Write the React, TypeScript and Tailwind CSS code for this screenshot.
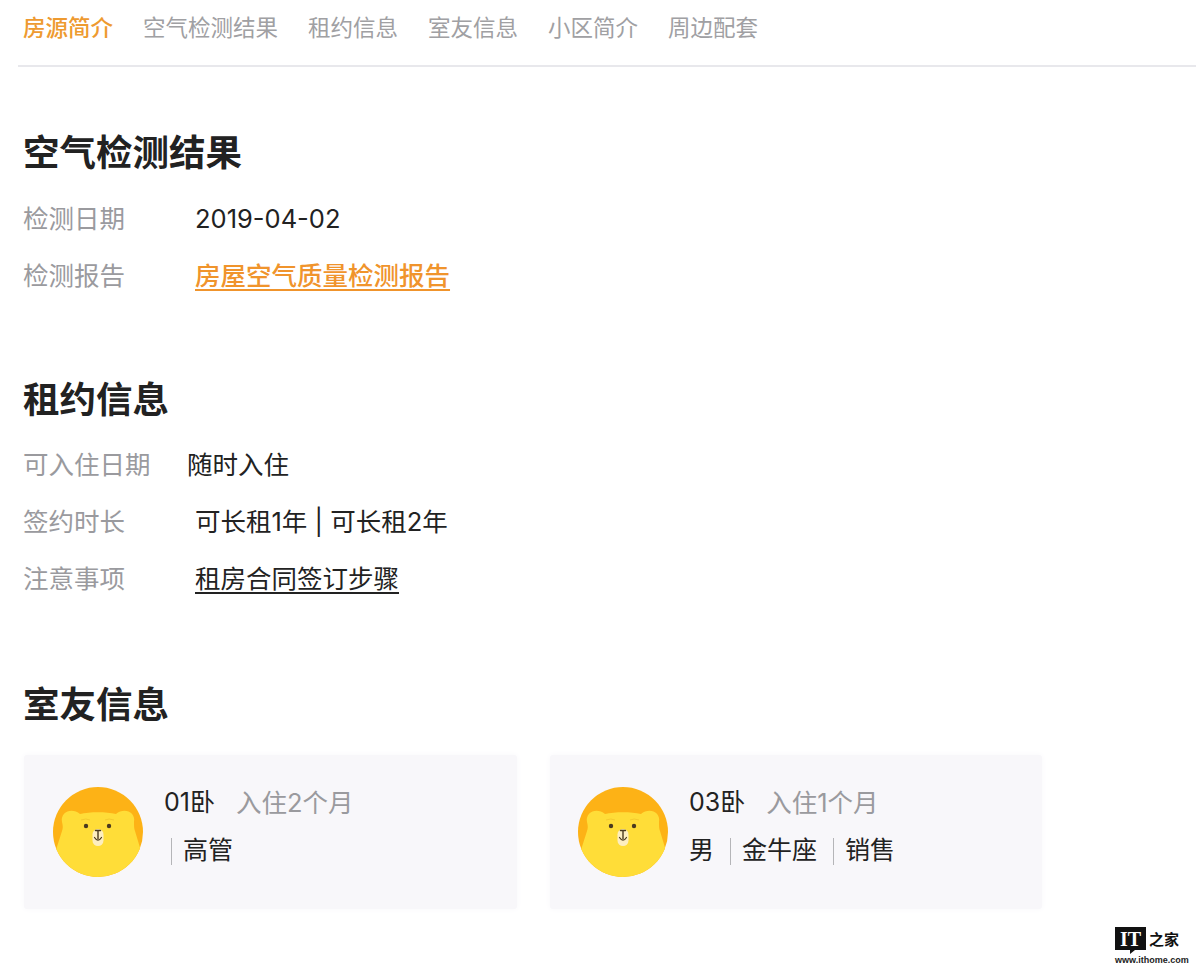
import React from 'react';

const navItems = ['房源简介', '空气检测结果', '租约信息', '室友信息', '小区简介', '周边配套'];

const BearAvatar = () => (
  <svg viewBox="0 0 90 90" className="w-[90px] h-[90px] shrink-0">
    <defs>
      <clipPath id="bear-clip">
        <circle cx="45" cy="45" r="45" />
      </clipPath>
    </defs>
    <circle cx="45" cy="45" r="45" fill="#fdb216" />
    <g clipPath="url(#bear-clip)">
      <path
        d="M9 35 C7 25 19 20 27 27 C37 24.5 53 24.5 63 27 C71 20 83 25 81 35 C81 39 81 42 82 44 L88 64 L88 90 L2 90 L2 66 L9 44 C10 41 10 39 9 35 Z"
        fill="#ffdd38"
      />
    </g>
    <circle cx="33" cy="39" r="2.2" fill="#4a3a20" />
    <circle cx="56" cy="39" r="2.2" fill="#4a3a20" />
    <path d="M28 33 Q33 31 37 33 M52 33 Q56 31 61 33" stroke="#f2c52c" strokeWidth="0.8" fill="none" />
    <rect x="39.5" y="42" width="11" height="17" rx="5.5" fill="#fdeec0" />
    <path d="M42.5 43.5 H47.5 M45 43.5 V52" stroke="#4a3a20" strokeWidth="1.4" fill="none" strokeLinecap="round" />
    <path d="M41.5 50.5 Q45 56 48.5 50.5" stroke="#4a3a20" strokeWidth="1.2" fill="none" strokeLinecap="round" />
  </svg>
);

const Divider = () => <span className="w-px h-[27px] bg-[#b5b5b8] ml-[16px] mr-[11px]" />;

const Watermark = () => (
  <div className="absolute left-[1115px] top-[927px] w-[64px]">
    <div className="flex items-start gap-[3px] h-[27px]">
      <div className="relative w-[31px] h-[23px] bg-[#111111] flex items-center justify-center">
        <span className="text-white text-[20px] leading-none font-black font-['Liberation_Serif',serif]">IT</span>
        <span className="absolute left-[15px] top-[23px] w-0 h-0 border-t-[4px] border-t-[#111111] border-r-[5px] border-r-transparent" />
      </div>
      <span className="text-[#111111] text-[15px] leading-[23px] font-bold whitespace-nowrap font-['Noto_Sans_CJK_SC',serif]">之家</span>
    </div>
    <p className="text-[#222222] text-[9px] leading-[12px] font-bold whitespace-nowrap font-['Liberation_Sans',sans-serif]">www.ithome.com</p>
  </div>
);

const InfoRow = ({ label, labelWidth, children }: { label: string; labelWidth: string; children: React.ReactNode }) => (
  <div className="flex items-center h-[57px] text-[25.5px]">
    <span className={`${labelWidth} shrink-0 text-[#9a9a9e]`}>{label}</span>
    <span className="text-[#222222]">{children}</span>
  </div>
);

export default function App() {
  return (
    <div lang="zh-CN" className="relative w-[1196px] h-[976px] overflow-hidden bg-white font-['Inter','Noto_Sans_CJK_SC',sans-serif]">
      {/* Tabs */}
      <nav className="ml-[18px] pl-[5px] h-[67px] border-b-2 border-[#e8e8ec] flex items-start gap-[30px] pt-[11px]">
        {navItems.map((item, i) => (
          <span
            key={item}
            className={`text-[22.5px] leading-[34px] whitespace-nowrap ${i === 0 ? 'text-[#ee9a30] font-medium' : 'text-[#a0a0a3]'}`}
          >
            {item}
          </span>
        ))}
      </nav>

      <main className="pl-[23px]">
        {/* Air check */}
        <section className="pt-[60px]">
          <h2 className="text-[36.5px] leading-[52px] font-semibold text-[#222222] mb-[12px]">空气检测结果</h2>
          <InfoRow label="检测日期" labelWidth="w-[172px]">2019-04-02</InfoRow>
          <InfoRow label="检测报告" labelWidth="w-[172px]">
            <a className="text-[#f0942c] font-medium underline underline-offset-4">房屋空气质量检测报告</a>
          </InfoRow>
        </section>

        {/* Lease */}
        <section className="pt-[69px]">
          <h2 className="text-[36.5px] leading-[52px] font-semibold text-[#222222] mb-[11px]">租约信息</h2>
          <InfoRow label="可入住日期" labelWidth="w-[164px]">随时入住</InfoRow>
          <InfoRow label="签约时长" labelWidth="w-[172px]">可长租1年 | 可长租2年</InfoRow>
          <InfoRow label="注意事项" labelWidth="w-[172px]">
            <a className="underline underline-offset-4">租房合同签订步骤</a>
          </InfoRow>
        </section>

        {/* Roommates */}
        <section className="pt-[71px]">
          <h2 className="text-[36.5px] leading-[52px] font-semibold text-[#222222] mb-[24px]">室友信息</h2>
          <div className="ml-px flex gap-[33px]">
            <div className="w-[493px] h-[154px] bg-[#f8f7fa] rounded-[3px] shadow-[0_0_6px_#f8f7fa] flex items-center pl-[29px] gap-[21px]">
              <BearAvatar />
              <div className="flex flex-col mb-[10px] text-[25px] text-[#222222]">
                <div className="h-[48px] flex items-center">
                  <span>01卧</span>
                  <span className="ml-[21px] text-[25.5px] text-[#9a9a9e]">入住2个月</span>
                </div>
                <div className="h-[48px] flex items-center">
                  <span className="w-px h-[27px] bg-[#b5b5b8] ml-[7px] mr-[11px]" />
                  <span>高管</span>
                </div>
              </div>
            </div>
            <div className="w-[492px] h-[154px] bg-[#f8f7fa] rounded-[3px] shadow-[0_0_6px_#f8f7fa] flex items-center pl-[28px] gap-[21px]">
              <BearAvatar />
              <div className="flex flex-col mb-[10px] text-[25px] text-[#222222]">
                <div className="h-[48px] flex items-center">
                  <span>03卧</span>
                  <span className="ml-[21px] text-[25.5px] text-[#9a9a9e]">入住1个月</span>
                </div>
                <div className="h-[48px] flex items-center">
                  <span>男</span>
                  <Divider />
                  <span>金牛座</span>
                  <Divider />
                  <span>销售</span>
                </div>
              </div>
            </div>
          </div>
        </section>
      </main>

      <Watermark />
    </div>
  );
}
